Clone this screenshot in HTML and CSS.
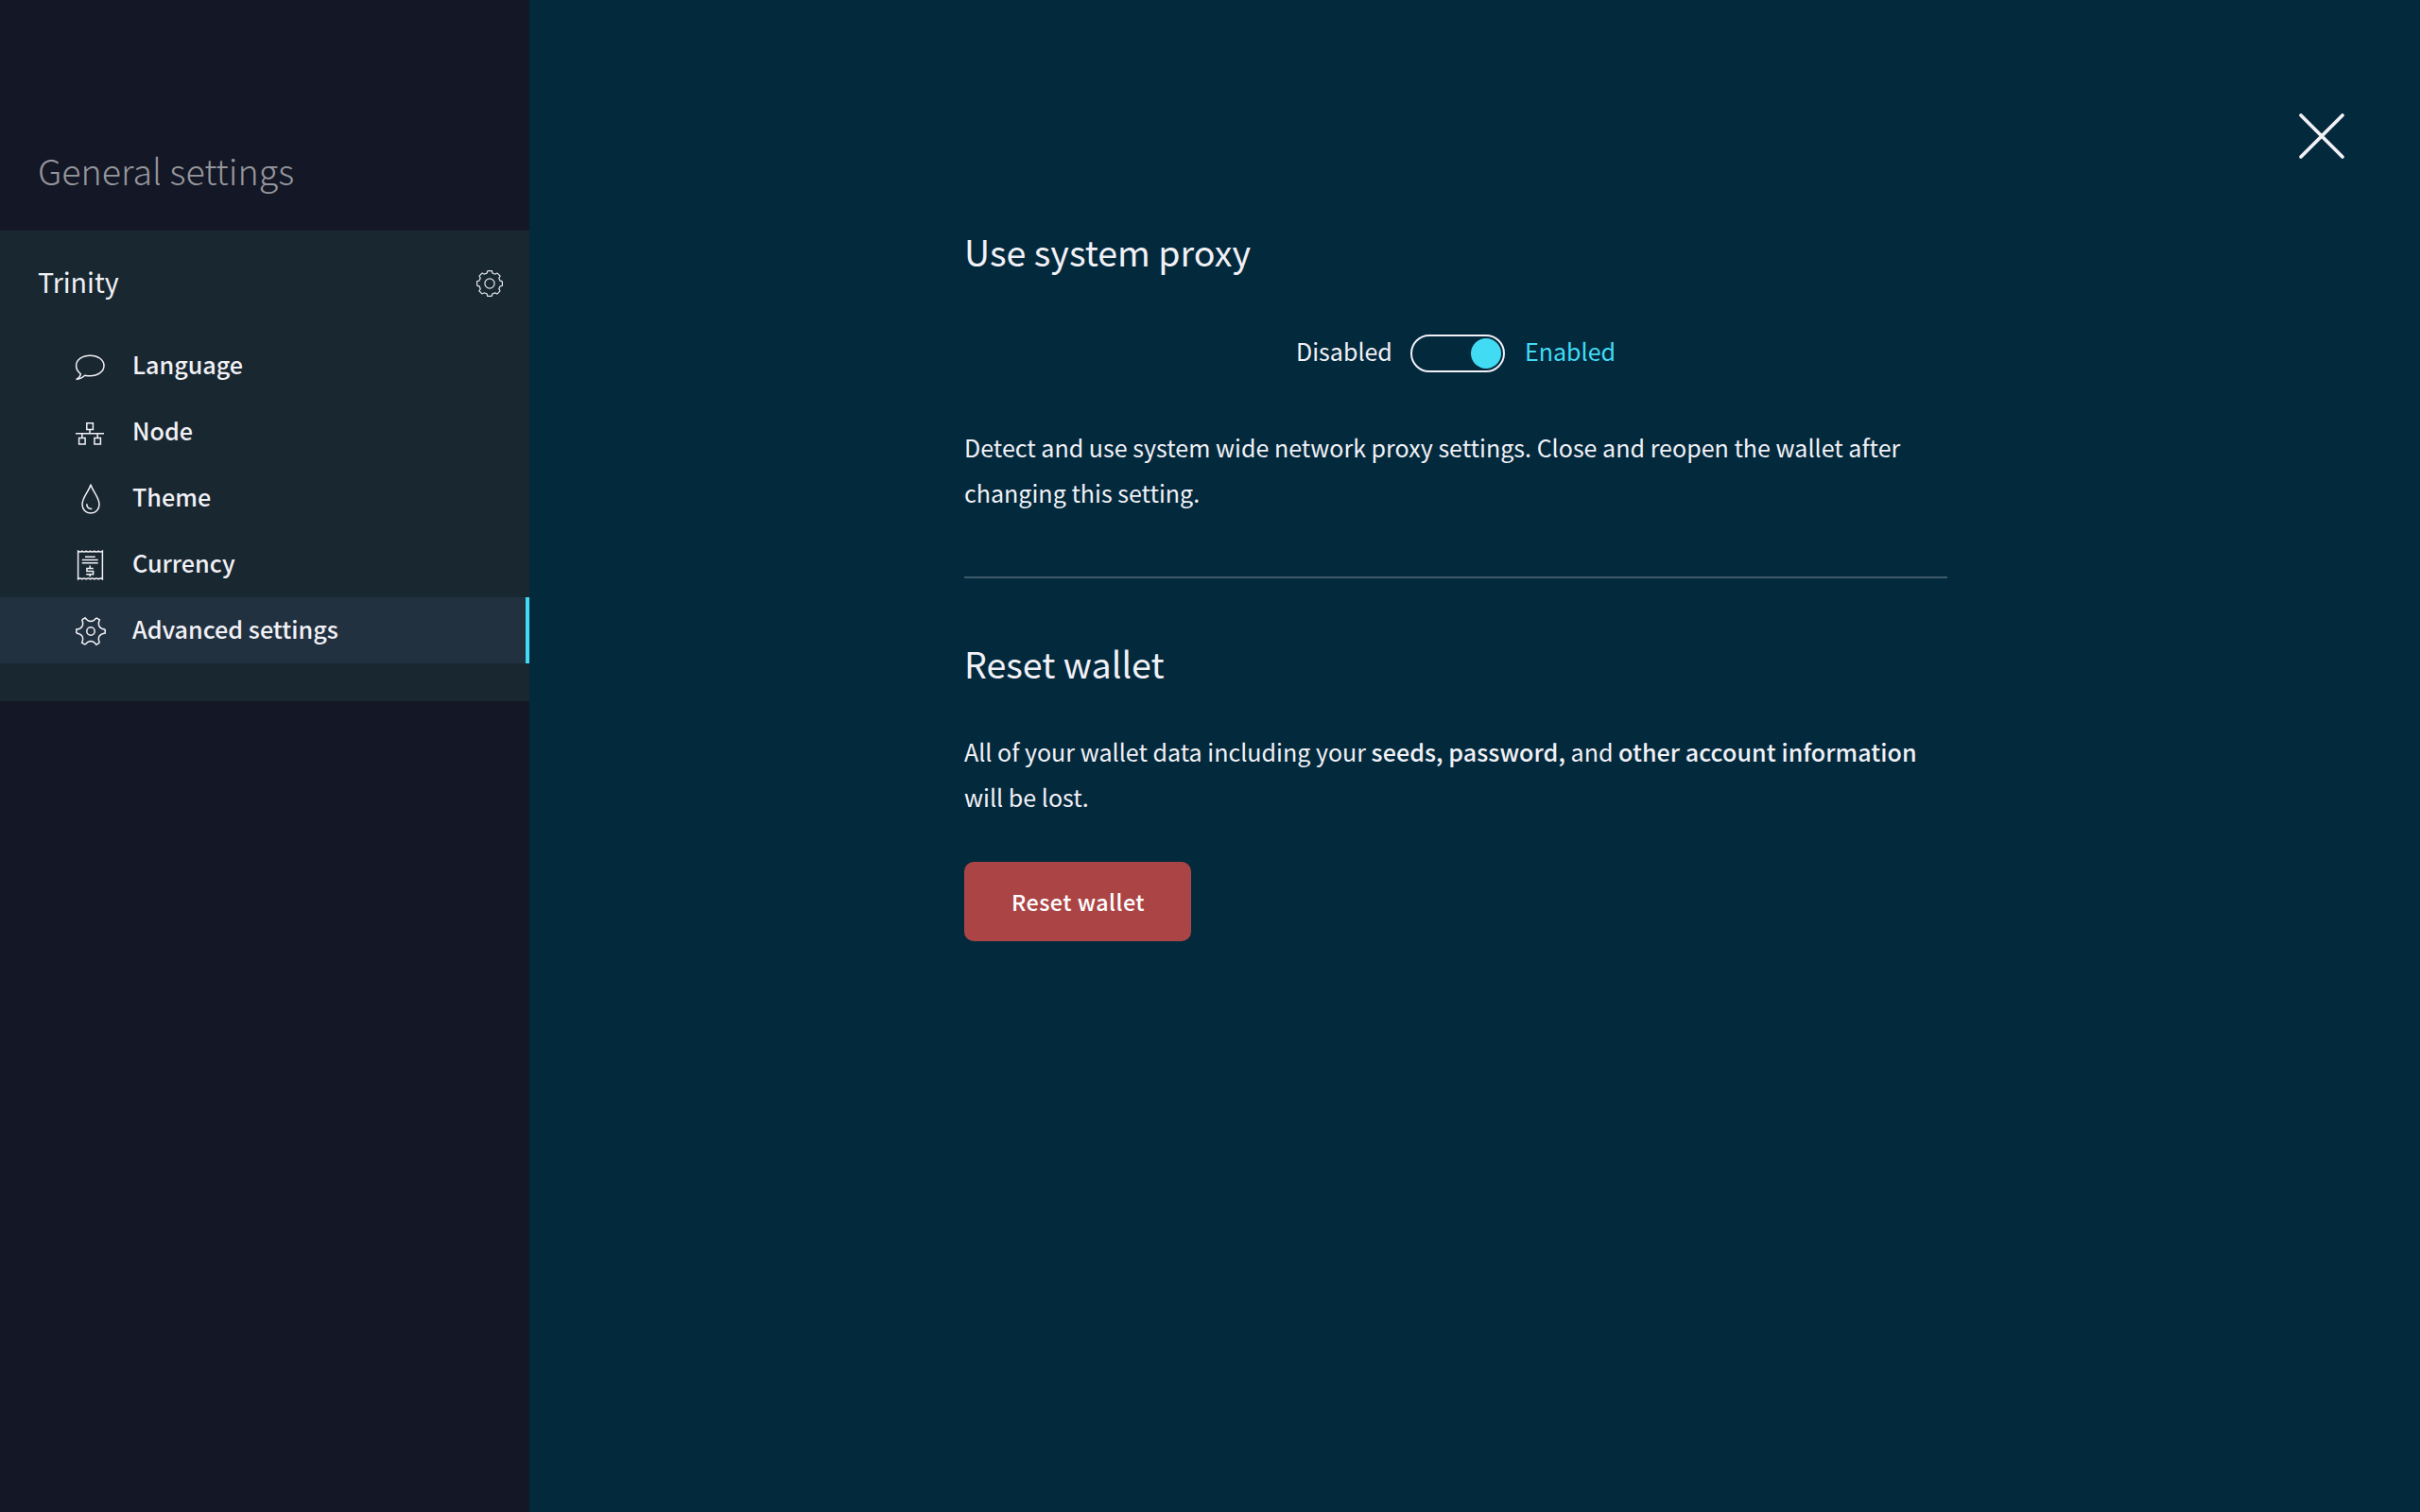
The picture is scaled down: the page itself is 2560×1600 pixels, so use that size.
FILE: index.html
```
<!DOCTYPE html>
<html lang="en">
<head>
<meta charset="utf-8">
<title>Trinity – Advanced settings</title>
<link rel="stylesheet" href="styles.css">
</head>
<body>
<div class="app">
  <aside class="sidebar">
    <h2 class="sidebar-title">General settings</h2>
    <section class="panel">
      <header class="panel-header">
        <span class="panel-name">Trinity</span>
        <svg class="panel-icon" viewBox="-15 -15 30 30">
          <defs><path id="cog-tooth" d="M13.4-2.3V2.3L11 2.9Q10.2 4.8 9.8 5.75L11.1 7.85"/></defs>
          <use href="#cog-tooth"/>
          <use href="#cog-tooth" transform="rotate(45)"/>
          <use href="#cog-tooth" transform="rotate(90)"/>
          <use href="#cog-tooth" transform="rotate(135)"/>
          <use href="#cog-tooth" transform="rotate(180)"/>
          <use href="#cog-tooth" transform="rotate(225)"/>
          <use href="#cog-tooth" transform="rotate(270)"/>
          <use href="#cog-tooth" transform="rotate(315)"/>
          <circle r="5.1"/>
        </svg>
      </header>
      <nav class="menu">
        <a class="item">
          <svg class="icon" viewBox="0 0 32 32"><path d="M5.3 24.6C2 22.3.6 19 .6 15.8.6 9.7 7.3 5.2 15.4 5.2S30 9.8 30 15.9 23.5 26.8 15.4 26.8C13.3 26.8 11.5 26.6 9.8 26.2 7 28.6 4 30.4.7 30.4 3.5 29 5 27 5.3 24.6Z"/></svg>
          <span class="label">Language</span>
        </a>
        <a class="item">
          <svg class="icon" viewBox="0 0 32 32"><path d="M11.8 6.8h6.6v6.6h-6.6zM3.6 22.6h6.5v6.5H3.6zM19.9 22.6h6.5v6.5h-6.5zM0 17.7H30M15 13.4v4.3M6.8 17.7v4.9M23.2 17.7v4.9"/></svg>
          <span class="label">Node</span>
        </a>
        <a class="item">
          <svg class="icon" viewBox="0 0 32 32"><path d="M16 1.8C14.3 8.6 7 15.2 7 22.7 7 28.2 11 32 16 32S25 28.2 25 22.7C25 15.2 17.7 8.6 16 1.8ZM11.8 22.2C11.8 25.6 13.8 27.6 17.3 27.6"/></svg>
          <span class="label">Theme</span>
        </a>
        <a class="item">
          <svg class="icon" viewBox="0 0 32 32"><path d="M2.6 31.8V2.2Q4.7 3.9 6.9 2.2 9 3.9 11.2 2.2 13.3 3.9 15.5 2.2 17.6 3.9 19.8 2.2 21.9 3.9 24.1 2.2 26.2 3.9 28.4 2.2V31.8Q26.2 30.1 24.1 31.8 21.9 30.1 19.8 31.8 17.6 30.1 15.5 31.8 13.3 30.1 11.2 31.8 9 30.1 6.9 31.8 4.7 30.1 2.6 31.8ZM10 8.3H20.7M6.7 11.5H23.7M6.7 14.8H23.7M18.8 20.4H11.9V23.6H18.6V26.7H11.2M15.2 17.5V20.4M15.2 26.7V29.2"/></svg>
          <span class="label">Currency</span>
        </a>
        <a class="item item-active">
          <svg class="icon" viewBox="-16 -17 32 32">
            <defs><path id="gear-tooth" d="M15.2-2V2C9.2 2.6 6.85 6.67 9.33 12.16"/></defs>
            <use href="#gear-tooth"/>
            <use href="#gear-tooth" transform="rotate(60)"/>
            <use href="#gear-tooth" transform="rotate(120)"/>
            <use href="#gear-tooth" transform="rotate(180)"/>
            <use href="#gear-tooth" transform="rotate(240)"/>
            <use href="#gear-tooth" transform="rotate(300)"/>
            <circle r="4.2"/>
          </svg>
          <span class="label">Advanced settings</span>
        </a>
      </nav>
    </section>
  </aside>
  <main class="content">
    <div class="top">
      <svg class="close" viewBox="0 0 50 50"><path d="M3 3 47 47M47 3 3 47"/></svg>
    </div>
    <div class="column">
      <h3 class="heading">Use system proxy</h3>
      <div class="toggle-row">
        <span class="toggle-label">Disabled</span>
        <span class="toggle"><span class="knob"></span></span>
        <span class="toggle-label toggle-on">Enabled</span>
      </div>
      <p class="text">Detect and use system wide network proxy settings. Close and reopen the wallet after changing this setting.</p>
      <hr class="rule">
      <h3 class="heading">Reset wallet</h3>
      <p class="text text-reset">All of your wallet data including your <strong>seeds, password,</strong> and <strong>other account information</strong> will be lost.</p>
      <button class="button">Reset wallet</button>
    </div>
  </main>
</div>
</body>
</html>
```
FILE: styles.css
```
* { box-sizing: border-box; }

body {
  margin: 0;
  background: #03293d;
  color: #f1f1f6;
  font: 400 25.06px/48px "Noto Sans CJK SC", sans-serif;
}

h2, h3, p { margin: 0; }

.app { display: flex; height: 1600px; }

.sidebar { width: 560px; background: #141725; }

.sidebar-title {
  height: 244px;
  padding: 156px 0 0 40px;
  font-size: 37.6px;
  font-weight: 300;
  color: #96979d;
}

.panel { background: #192731; padding-bottom: 40px; }

.panel-header {
  display: flex;
  align-items: center;
  justify-content: space-between;
  height: 108px;
  padding: 4px 27px 0 40px;
}

.panel-name { font-size: 28.6px; padding-bottom: 4px; }

.panel-icon {
  width: 30px;
  height: 30px;
  fill: none;
  stroke: #e6e8ec;
  stroke-width: 1.2;
}

.item {
  display: flex;
  align-items: center;
  gap: 28px;
  height: 70px;
  padding-left: 80px;
}

.item-active {
  background: #223140;
  border-right: 4px solid #41dcf4;
}

.icon {
  width: 32px;
  height: 32px;
  overflow: visible;
  fill: none;
  stroke: #f1f1f6;
  stroke-width: 1.5;
}

.label { font-weight: 500; font-size: 25.15px; padding-bottom: 4px; }

.content { flex: 1; }

.top {
  display: flex;
  justify-content: flex-end;
  height: 242px;
  padding: 119px 79px 0 0;
}

.close {
  width: 50px;
  height: 50px;
  fill: none;
  stroke: #f1f1f6;
  stroke-width: 3.8;
  stroke-linecap: round;
}

.column { width: 1040px; margin-left: 460px; }

.heading { font-size: 37.6px; font-weight: 400; }

.toggle-row {
  display: flex;
  align-items: center;
  justify-content: center;
  gap: 20px;
  margin: 64px 0 55px;
  height: 40px;
}

.toggle-label { padding-bottom: 6px; }

.toggle-on { color: #41dcf4; }

.toggle {
  display: flex;
  justify-content: flex-end;
  width: 100px;
  height: 40px;
  margin: 0 1px 0 -1px;
  padding: 2px;
  border: 2px solid #f1f1f6;
  border-radius: 20px;
}

.knob { width: 32px; height: 32px; border-radius: 50%; background: #41dcf4; }

.rule { height: 2px; margin: 65px 0 66px; border: 0; background: #3f5b6b; }

.text-reset { margin: 45px 0; }

.text strong { font-weight: 500; letter-spacing: 0.06px; }

.button {
  display: block;
  width: 240px;
  height: 84px;
  padding: 0 0 0 1px;
  border: 0;
  border-radius: 10px;
  background: #ab4545;
  color: #fff;
  font: 500 23.3px/48px "Noto Sans CJK SC", sans-serif;
  letter-spacing: 0.48px;
}
```
